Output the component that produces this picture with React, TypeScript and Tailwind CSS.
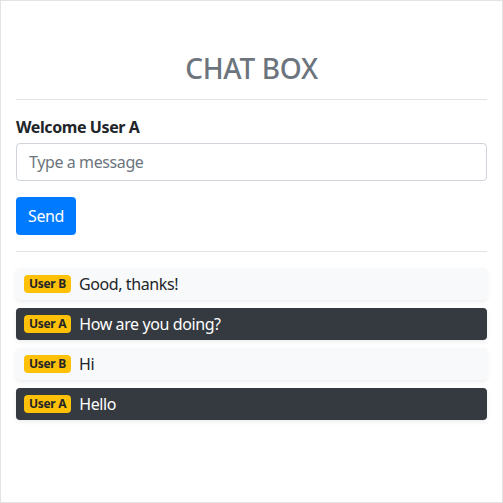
import React from "react";

const messages = [
  { user: "User B", text: "Good, thanks!", dark: false },
  { user: "User A", text: "How are you doing?", dark: true },
  { user: "User B", text: "Hi", dark: false },
  { user: "User A", text: "Hello", dark: true },
];

export default function App() {
  return (
    <div
      className="w-[503px] h-[503px] border border-[#e3e3e3] bg-white px-[15px] text-[#212529] tracking-[-0.4px]"
      style={{ fontFamily: '"Noto Sans", "Open Sans", sans-serif' }}
    >
      <h3 className="mt-[50px] h-[34px] text-center text-[28px] leading-[34px] font-medium tracking-[-0.3px] text-[#6c757d]">
        CHAT BOX
      </h3>
      <div className="mt-[14px] h-px bg-[#e2e2e2]" />
      <div className="mt-[15px] text-[16px] leading-[24px] font-bold">Welcome User A</div>
      <input
        className="mt-[4px] block h-[38px] w-full rounded-[4px] border border-[#ced4da] px-[12px] text-[16px] placeholder:text-[#6c757d] outline-none"
        placeholder="Type a message"
      />
      <button className="mt-[16px] h-[38px] rounded-[4px] bg-[#007bff] px-[12px] text-[16px] text-white">
        Send
      </button>
      <div className="mt-[16px] h-px bg-[#e2e2e2]" />
      <div className="mt-[16px] flex flex-col gap-[8px]">
        {messages.map((m, i) => (
          <div
            key={i}
            className={
              m.dark
                ? "flex h-[32px] items-center rounded-[4px] bg-[#343a40] px-[8px] text-white shadow-[0_2px_4px_rgba(0,0,0,0.075)]"
                : "flex h-[32px] items-center rounded-[4px] bg-[#f8f9fa] px-[8px] text-[#212529] shadow-[0_2px_4px_rgba(0,0,0,0.075)]"
            }
          >
            <span className="mr-[8px] flex h-[18px] items-center rounded-[4px] bg-[#ffc107] px-[5px] text-[12px] font-bold tracking-[-0.3px] text-[#212529]">
              {m.user}
            </span>
            <span className="text-[16px]">{m.text}</span>
          </div>
        ))}
      </div>
    </div>
  );
}
